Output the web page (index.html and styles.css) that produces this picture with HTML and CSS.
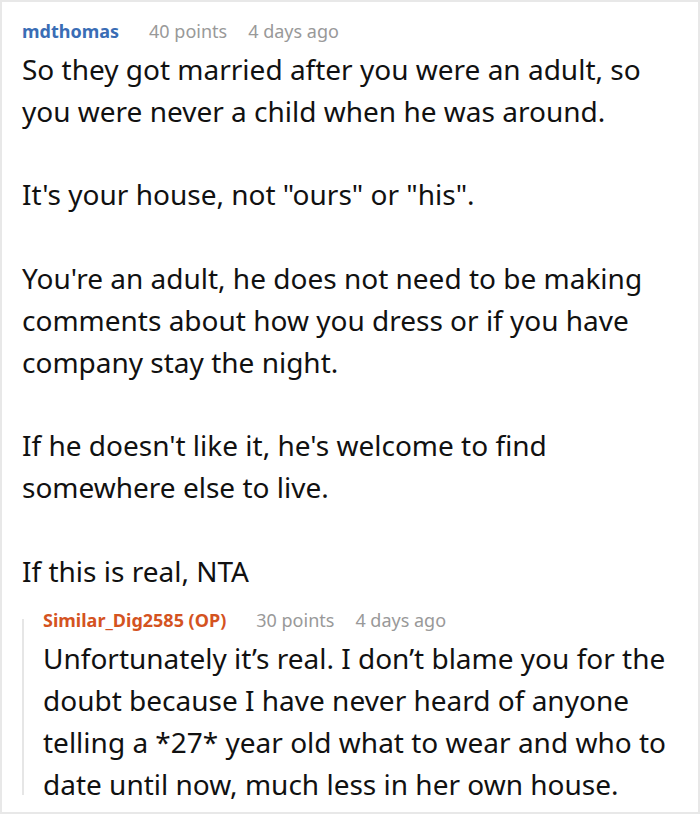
FILE: index.html
```html
<!DOCTYPE html>
<html>
<head>
<meta charset="utf-8">
<link rel="stylesheet" href="styles.css">
</head>
<body>
<div class="frame">
  <div class="comment">
    <div class="meta">
      <span class="author">mdthomas</span>
      <span class="points">40 points</span>
      <span class="time">4 days ago</span>
    </div>
    <div class="body">
      <p>So they got married after you were an adult, so you were never a child when he was around.</p>
      <p>It's your house, not "ours" or "his".</p>
      <p>You're an adult, he does not need to be making comments about how you dress or if you have company stay the night.</p>
      <p>If he doesn't like it, he's welcome to find somewhere else to live.</p>
      <p>If this is real, NTA</p>
    </div>
    <div class="reply">
      <div class="meta">
        <span class="author op">Similar_Dig2585 (OP)</span>
        <span class="points">30 points</span>
        <span class="time">4 days ago</span>
      </div>
      <div class="body">
        <p>Unfortunately it’s real. I don’t blame you for the doubt because I have never heard of anyone telling a *27* year old what to wear and who to date until now, much less in her own house.</p>
      </div>
    </div>
  </div>
</div>
</body>
</html>
```
FILE: styles.css
```css
html, body {
  margin: 0;
  padding: 0;
  background: #fff;
}
.frame {
  width: 700px;
  height: 814px;
  box-sizing: border-box;
  border: 2px solid #e8e8e8;
  overflow: hidden;
  font-family: "Noto Sans", "Open Sans", sans-serif;
  color: #111;
}
.comment {
  padding: 17px 6px 0 20px;
}
.meta {
  display: flex;
  align-items: baseline;
  font-size: 18px;
  line-height: 24px;
  color: #999;
}
.author {
  font-weight: 700;
  color: #3a6db5;
  margin-right: 30px;
}
.author.op {
  color: #d4531f;
}
.points {
  margin-right: 21px;
}
.body {
  font-size: 28px;
  line-height: 41.8px;
  margin-top: 6px;
}
.body p {
  margin: 0 0 41.8px 0;
}
.body p:last-child {
  margin-bottom: 0;
}
.reply {
  position: relative;
  margin-top: 16px;
  padding-left: 21px;
}
.reply::before {
  content: "";
  position: absolute;
  left: 0;
  top: 11px;
  bottom: 11px;
  width: 2px;
  background: #e6e6e6;
}
```
